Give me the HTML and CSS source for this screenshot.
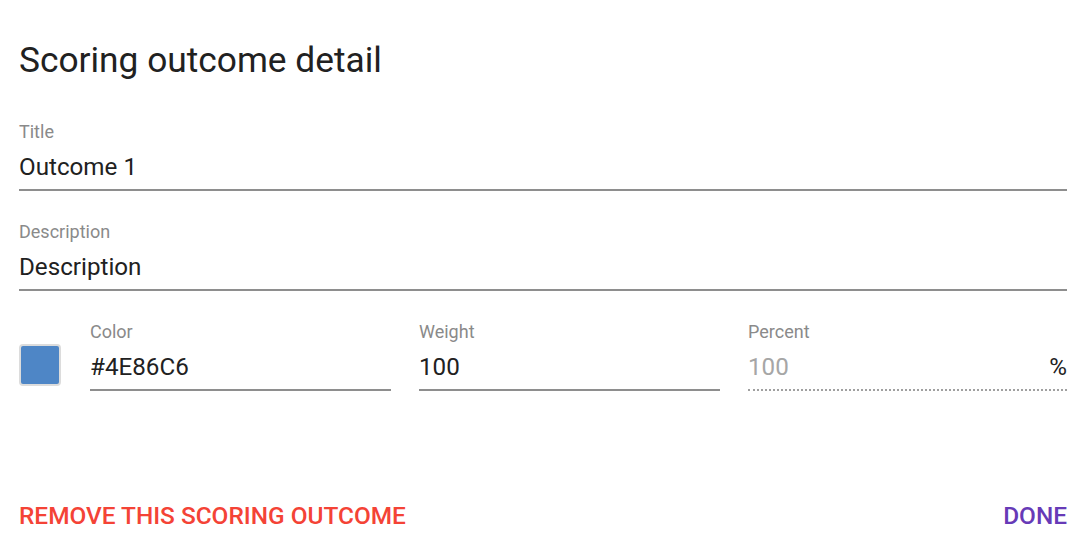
FILE: index.html
```html
<!DOCTYPE html>
<html lang="en">
<head>
  <meta charset="UTF-8">
  <title>Scoring outcome detail</title>
  <meta name="viewport" content="width=device-width, initial-scale=1.0">
  <link rel="stylesheet" href="styles.css">
</head>
<body>

<div class="dialog">
  <h1>Scoring outcome detail</h1>

  <div class="field">
    <label>Title</label>
    <div class="value">Outcome 1</div>
  </div>

  <div class="field">
    <label>Description</label>
    <div class="value">Description</div>
  </div>

  <div class="row">
    <div class="swatch"></div>
    <div class="field">
      <label>Color</label>
      <div class="value">#4E86C6</div>
    </div>
    <div class="field">
      <label>Weight</label>
      <div class="value">100</div>
    </div>
    <div class="field disabled">
      <label>Percent</label>
      <div class="value"><span>100</span><span class="suffix">%</span></div>
    </div>
  </div>

  <div class="actions">
    <button class="remove">Remove this scoring outcome</button>
    <button class="done">Done</button>
  </div>
</div>

</body>
</html>
```

FILE: styles.css
```css
* { box-sizing: border-box; margin: 0; padding: 0; }
html, body {
  font-family: Roboto, 'Noto Sans', sans-serif;
  background: #fff;
  color: #212121;
}
.dialog {
  padding: 38px 17px 0 19px;
  display: flex;
  flex-direction: column;
}
h1 {
  font-size: 35.3px;
  font-weight: 400;
  line-height: 44px;
  margin-bottom: 39px;
}
.field {
  margin-bottom: 30px;
}
label {
  display: block;
  font-size: 18px;
  color: #8a8a8a;
  line-height: 22px;
  margin-bottom: 9px;
}
.value {
  display: flex;
  justify-content: space-between;
  font-size: 24.2px;
  line-height: 30px;
  padding-bottom: 7px;
  border-bottom: 2px solid #8e8e8e;
}
.row {
  display: grid;
  grid-template-columns: 43px 301px 301px 1fr;
  column-gap: 28px;
  align-items: end;
}
.row .field {
  margin-bottom: 0;
}
.swatch {
  width: 42px;
  height: 42px;
  margin-bottom: 5px;
  background: #4e86c6;
  border: 2px solid #dcdcdc;
  border-radius: 4px;
}
.disabled .value {
  color: #a6a6a6;
  border-bottom: 2px dotted #a0a0a0;
}
.disabled .suffix {
  color: #212121;
}
.actions {
  display: flex;
  justify-content: space-between;
  margin-top: 110px;
}
button {
  background: none;
  border: none;
  font-family: Roboto, sans-serif;
  font-size: 24.4px;
  font-weight: 500;
  text-transform: uppercase;
  line-height: 30px;
  cursor: pointer;
}
.remove {
  color: #f44336;
}
.done {
  color: #673ab7;
}
```
